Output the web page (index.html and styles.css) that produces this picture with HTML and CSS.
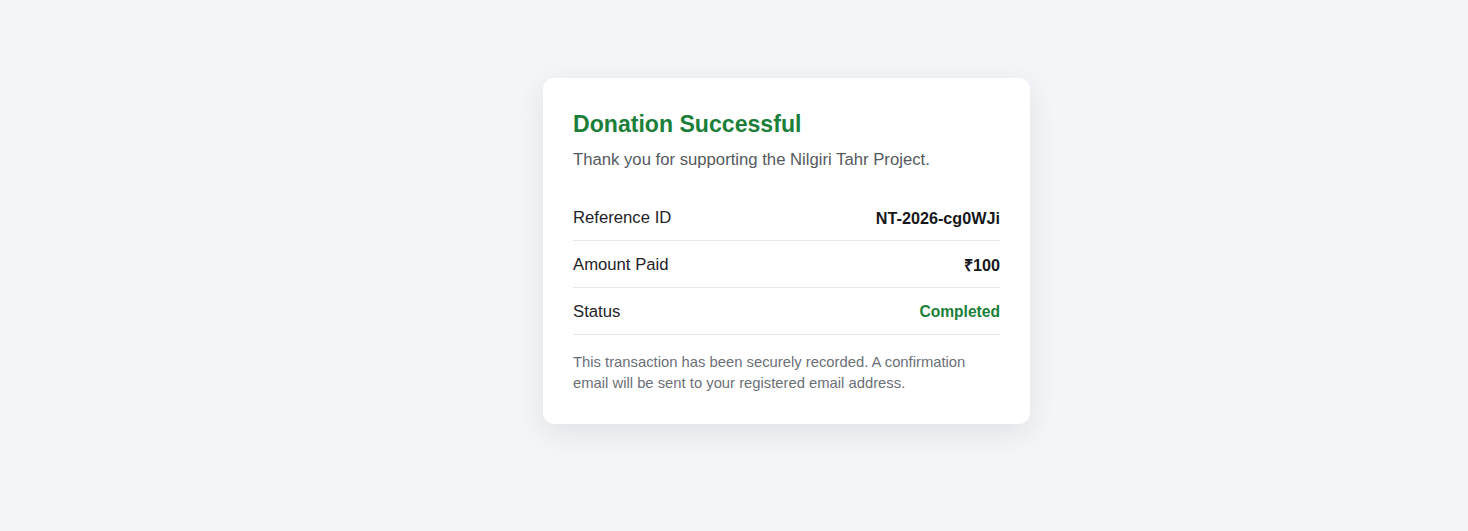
FILE: index.html
```html
<!DOCTYPE html>
<html lang="en">
<head>
<meta charset="utf-8">
<title>Donation Successful</title>
<link rel="stylesheet" href="styles.css">
</head>
<body>
<main class="page">
  <section class="card">
    <h1 class="title">Donation Successful</h1>
    <p class="subtitle">Thank you for supporting the Nilgiri Tahr Project.</p>
    <div class="details">
      <div class="row">
        <span class="label">Reference ID</span>
        <span class="value">NT-2026-cg0WJi</span>
      </div>
      <div class="row">
        <span class="label">Amount Paid</span>
        <span class="value">₹100</span>
      </div>
      <div class="row">
        <span class="label">Status</span>
        <span class="value success">Completed</span>
      </div>
    </div>
    <p class="note">This transaction has been securely recorded. A confirmation email will be sent to your registered email address.</p>
  </section>
</main>
</body>
</html>
```

FILE: styles.css
```css
* { box-sizing: border-box; }

html, body {
  margin: 0;
  padding: 0;
  background: #f4f5f8;
  font-family: "Liberation Sans", Arial, sans-serif;
}

.page {
  min-height: 531px;
  padding: 78px 0 0 543px;
}

.card {
  width: 487px;
  background: #ffffff;
  border-radius: 11px;
  padding: 30px;
  box-shadow: 0 8px 28px rgba(20, 30, 60, 0.09);
}

.title {
  margin: 0 0 10px;
  font-size: 23.1px;
  line-height: 33px;
  font-weight: 700;
  color: #1b7f3a;
}

.subtitle {
  margin: 0 0 25px;
  font-size: 16.7px;
  line-height: 18px;
  color: #555a60;
}

.details {
  display: flex;
  flex-direction: column;
}

.row {
  display: flex;
  justify-content: space-between;
  align-items: center;
  padding: 15px 0 13px;
  line-height: 18px;
  border-bottom: 1px solid #e6e7ea;
}

.label {
  font-size: 16.7px;
  color: #1f2328;
}

.value {
  font-size: 16.2px;
  font-weight: 700;
  color: #16181b;
}

.value.success {
  font-size: 15.6px;
  color: #1b7f3a;
}

.note {
  margin: 17px 0 0;
  font-size: 14.8px;
  line-height: 21px;
  color: #6b6f76;
}
```
